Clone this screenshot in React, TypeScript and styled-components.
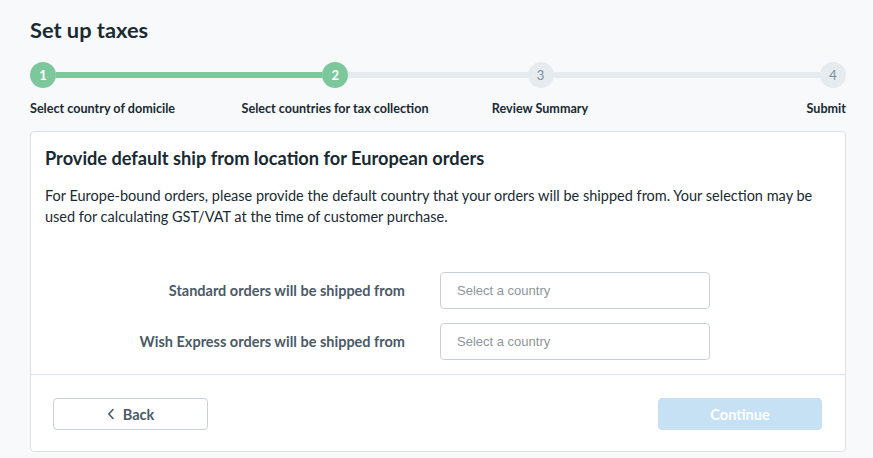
import { Fragment } from "react";
import styled, { createGlobalStyle } from "styled-components";

const GlobalStyle = createGlobalStyle`
  * {
    box-sizing: border-box;
  }
  body {
    margin: 0;
    background: #f8f9fb;
    font-family: Lato, "Open Sans", sans-serif;
    color: #192a32;
  }
`;

const Page = styled.div`
  padding: 16px 27px 0 30px;
  width: 873px;
`;

const Title = styled.h1`
  margin: 0;
  font-size: 21.8px;
  line-height: 28px;
  font-weight: 700;
  color: #192a32;
`;

const Stepper = styled.div`
  margin-top: 18px;
  width: 816px;
`;

const Track = styled.div`
  display: flex;
  align-items: center;
  height: 26px;
`;

const Dot = styled.div<{ $done: boolean }>`
  width: 26px;
  height: 26px;
  flex: none;
  border-radius: 50%;
  display: flex;
  align-items: center;
  justify-content: center;
  font-size: 13px;
  font-weight: ${(p) => (p.$done ? 700 : 400)};
  background: ${(p) => (p.$done ? "#7cc89c" : "#e5ebef")};
  color: ${(p) => (p.$done ? "#ffffff" : "#7f8d99")};
`;

const Bar = styled.div<{ $done: boolean; $grow: number }>`
  flex: ${(p) => p.$grow} 1 0;
  height: 6px;
  background: ${(p) => (p.$done ? "#7cc89c" : "#e5ebef")};
`;

const Labels = styled.div`
  display: grid;
  grid-template-columns: 203px 204px 206px 1fr;
  margin-top: 13px;
`;

const StepLabel = styled.div<{ $align: string }>`
  font-size: 12.6px;
  line-height: 16px;
  font-weight: 700;
  color: #192a32;
  text-align: ${(p) => p.$align};
  white-space: nowrap;
`;

const Card = styled.div`
  margin-top: 14px;
  width: 816px;
  background: #ffffff;
  border: 1px solid #dae2e7;
  border-radius: 4px;
`;

const Body = styled.div`
  padding: 16px 14px 14px 14px;
`;

const CardTitle = styled.h2`
  margin: 0;
  font-size: 18.2px;
  line-height: 20px;
  font-weight: 700;
  color: #192a32;
`;

const Text = styled.p`
  margin: 17px 0 0;
  font-size: 14.5px;
  line-height: 21px;
  color: #192a32;
`;

const Form = styled.div`
  margin-top: 45px;
  display: grid;
  grid-template-columns: 360px 270px;
  column-gap: 35px;
  row-gap: 14px;
  align-items: center;
`;

const FieldLabel = styled.label`
  text-align: right;
  font-size: 14.5px;
  font-weight: 700;
  color: #4b5a66;
`;

const Select = styled.div`
  height: 37px;
  border: 1px solid #c9d1d8;
  border-radius: 4px;
  padding: 0 16px;
  display: flex;
  align-items: center;
  font-family: "Liberation Sans", Arial, sans-serif;
  font-size: 13px;
  color: #8e959b;
`;

const Footer = styled.div`
  border-top: 1px solid #dae2e7;
  padding: 23px 23px 21px 22px;
  display: flex;
  justify-content: space-between;
  align-items: center;
`;

const Button = styled.button<{ $primary?: boolean }>`
  height: 32px;
  width: ${(p) => (p.$primary ? "164px" : "155px")};
  border-radius: 4px;
  border: 1px solid ${(p) => (p.$primary ? "#c5e1f3" : "#c9d1d8")};
  background: ${(p) => (p.$primary ? "#c5e1f3" : "#ffffff")};
  color: ${(p) => (p.$primary ? "#ffffff" : "#4b5a66")};
  font-family: Lato, sans-serif;
  font-size: 14.5px;
  font-weight: 700;
  display: flex;
  align-items: center;
  justify-content: center;
  gap: 8px;
  padding: 0;
`;

const steps = [
  { n: 1, label: "Select country of domicile", align: "left" },
  { n: 2, label: "Select countries for tax collection", align: "center" },
  { n: 3, label: "Review Summary", align: "center" },
  { n: 4, label: "Submit", align: "right" },
];

const bars = [266, 179, 266];
const current = 2;

function Chevron() {
  return (
    <svg width="8" height="12" viewBox="0 0 8 12" fill="none">
      <path d="M6 1.5 L1.8 6 L6 10.5" stroke="#4b5a66" strokeWidth="1.6" strokeLinecap="round" strokeLinejoin="round" />
    </svg>
  );
}

export default function App() {
  return (
    <>
      <GlobalStyle />
      <Page>
        <Title>Set up taxes</Title>
        <Stepper>
          <Track>
            {steps.map((s, i) => (
              <Fragment key={s.n}>
                <Dot $done={s.n <= current}>{s.n}</Dot>
                {i < bars.length && <Bar $grow={bars[i]} $done={s.n + 1 <= current} />}
              </Fragment>
            ))}
          </Track>
          <Labels>
            {steps.map((s) => (
              <StepLabel key={s.n} $align={s.align}>
                {s.label}
              </StepLabel>
            ))}
          </Labels>
        </Stepper>
        <Card>
          <Body>
            <CardTitle>Provide default ship from location for European orders</CardTitle>
            <Text>
              For Europe-bound orders, please provide the default country that your orders will be shipped from. Your
              selection may be used for calculating GST/VAT at the time of customer purchase.
            </Text>
            <Form>
              <FieldLabel>Standard orders will be shipped from</FieldLabel>
              <Select>Select a country</Select>
              <FieldLabel>Wish Express orders will be shipped from</FieldLabel>
              <Select>Select a country</Select>
            </Form>
          </Body>
          <Footer>
            <Button>
              <Chevron />
              Back
            </Button>
            <Button $primary>Continue</Button>
          </Footer>
        </Card>
      </Page>
    </>
  );
}
